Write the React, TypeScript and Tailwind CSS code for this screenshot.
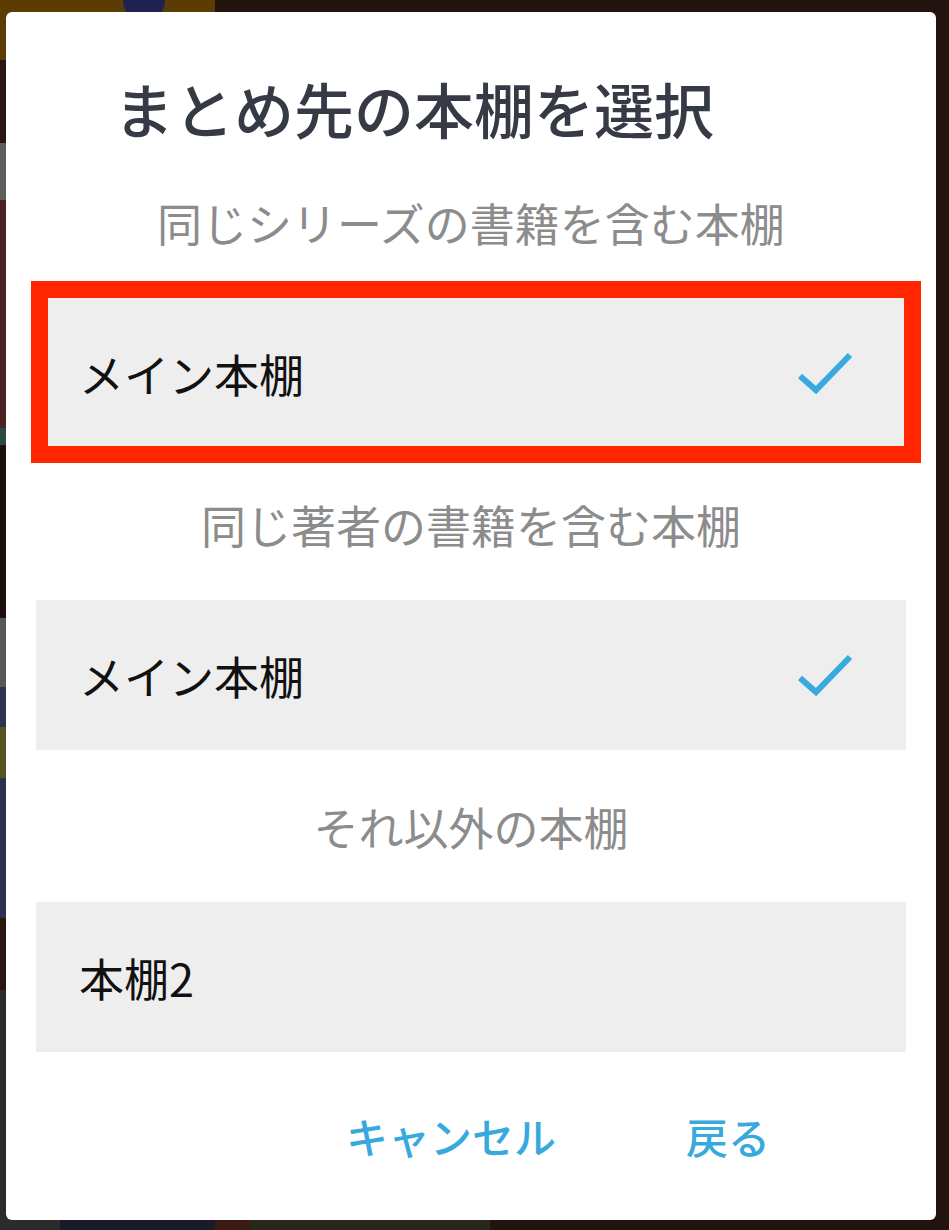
import React from 'react';

type Shelf = { name: string; checked?: boolean; highlighted?: boolean };

type Section = { title: string; shelves: Shelf[] };

const sections: Section[] = [
  {
    title: '同じシリーズの書籍を含む本棚',
    shelves: [{ name: 'メイン本棚', checked: true, highlighted: true }],
  },
  {
    title: '同じ著者の書籍を含む本棚',
    shelves: [{ name: 'メイン本棚', checked: true }],
  },
  {
    title: 'それ以外の本棚',
    shelves: [{ name: '本棚2' }],
  },
];

const fontStack = { fontFamily: '"Noto Sans CJK JP", "Noto Sans", sans-serif' };

const CheckMark = () => (
  <svg width="56" height="44" viewBox="0 0 56 44" fill="none">
    <polyline
      points="3,25 19,39 53,4"
      stroke="#38aadf"
      strokeWidth="6"
      strokeLinecap="butt"
      strokeLinejoin="miter"
    />
  </svg>
);

// Dimmed app screen behind the dialog (only the edges show)
const Backdrop = () => (
  <div className="absolute inset-0 flex">
    <div className="flex w-[215px] flex-col">
      <div className="relative h-[60px] bg-[#5c3c02]">
        <div className="absolute -top-[20px] left-[123px] h-[42px] w-[42px] rounded-full bg-[#1f2150]" />
      </div>
      <div className="h-[83px] bg-[#2a1712]" />
      <div className="h-[57px] bg-[#5e5e5e]" />
      <div className="h-[228px] bg-[#4a2224]" />
      <div className="h-[17px] bg-[#2b4a45]" />
      <div className="h-[173px] bg-[#1d0f0b]" />
      <div className="h-[69px] bg-[#575757]" />
      <div className="h-[40px] bg-[#2e3354]" />
      <div className="h-[51px] bg-[#57521e]" />
      <div className="h-[140px] bg-[#2d3150]" />
      <div className="h-[72px] bg-[#2a150f]" />
      <div className="flex flex-1">
        <div className="w-[60px] bg-[#2b2b2b]" />
        <div className="flex-1 bg-[#191b26]" />
      </div>
    </div>
    <div className="flex flex-1 flex-col bg-[#23130f]">
      <div className="flex-1" />
      <div className="flex h-[240px]">
        <div className="w-[35px] bg-[#3b1a12]" />
        <div className="w-[240px] bg-[#29261b]" />
        <div className="flex-1" />
      </div>
    </div>
  </div>
);

const ShelfRow: React.FC<{ shelf: Shelf }> = ({ shelf }) => (
  <div className="relative mx-[30px]">
    <div className="flex h-[150px] items-center justify-between bg-[#eeeeee] pl-[43px] pr-[53px]">
      <span className="text-[45px] leading-none text-[#111111]">{shelf.name}</span>
      {shelf.checked && <CheckMark />}
    </div>
    {shelf.highlighted && (
      <div className="pointer-events-none absolute -top-[17px] -left-[5px] -right-[15px] -bottom-[15px] border-[17px] border-[#ff2600]" />
    )}
  </div>
);

export default function App() {
  return (
    <div className="relative h-[1230px] w-[949px] overflow-hidden" style={fontStack}>
      <Backdrop />

      {/* Dialog */}
      <div className="relative pt-[12px] pl-[6px]">
        <div className="flex h-[1208px] w-[930px] flex-col rounded-md bg-white">
          <h1 className="pt-[66px] pb-[8px] pl-[108px] text-[60px] font-medium leading-[60px] text-[#363a45]">
            まとめ先の本棚を選択
          </h1>

          {sections.map((section, i) => (
            <div key={i}>
              <div className="flex h-[152px] items-center justify-center">
                <h2 className="text-[45px] leading-none text-[#8c8c8c]">{section.title}</h2>
              </div>
              {section.shelves.map((shelf, j) => (
                <ShelfRow key={j} shelf={shelf} />
              ))}
            </div>
          ))}

          <div className="flex flex-1 items-center justify-end gap-[130px] pr-[166px]">
            <button className="text-[42px] font-medium leading-none text-[#38a9dd]">キャンセル</button>
            <button className="text-[42px] font-medium leading-none text-[#38a9dd]">戻る</button>
          </div>
        </div>
      </div>
    </div>
  );
}
